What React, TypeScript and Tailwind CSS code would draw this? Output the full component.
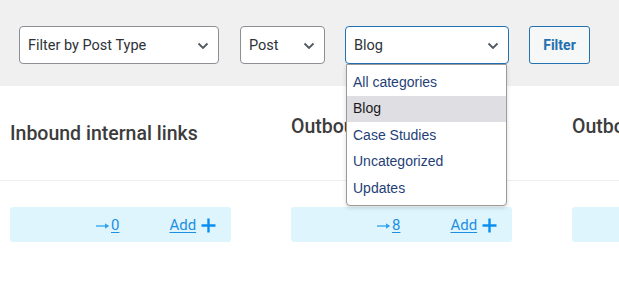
import React from "react";

const Chevron = () => (
  <svg width="12" height="8" viewBox="0 0 12 8" className="shrink-0">
    <path d="M1.5 1.5 L6 6 L10.5 1.5" fill="none" stroke="#50575e" strokeWidth="1.8" />
  </svg>
);

function Select({ label, width, focused }: { label: string; width: string; focused?: boolean }) {
  return (
    <div
      className={`${width} h-[38px] flex items-center justify-between pl-[8px] pr-[9px] pt-[2px] bg-white rounded-[4px] border ${
        focused ? "border-[#2271b1] border-[1.5px]" : "border-[#8c8f94]"
      } text-[14.5px] text-[#2c3338]`}
      style={{ fontFamily: "Roboto, sans-serif" }}
    >
      <span>{label}</span>
      <Chevron />
    </div>
  );
}

function Bar({ count }: { count: string }) {
  return (
    <div
      className="w-[221px] h-[35px] bg-[#def5fd] rounded-[3px] flex items-center pl-[86px] pt-[2px] text-[15px]"
      style={{ fontFamily: "Roboto, sans-serif" }}
    >
      <svg width="14" height="8" viewBox="0 0 14 8" className="mt-[1px]">
        <path d="M0 4 H12" stroke="#2ea3ee" strokeWidth="1.3" />
        <path d="M9 1.2 L13.2 4 L9 6.8 Z" fill="#2ea3ee" />
      </svg>
      <span className="ml-[1px] text-[#1d8fe2] underline underline-offset-2">{count}</span>
      <span className="ml-[50px] text-[#1d8fe2] underline underline-offset-2">Add</span>
      <svg width="15" height="15" viewBox="0 0 15 15" className="ml-[5px]">
        <path d="M7.5 0.5 V14.5 M0.5 7.5 H14.5" stroke="#0a8ff0" strokeWidth="2.4" />
      </svg>
    </div>
  );
}

export default function App() {
  const headFont = { fontFamily: "Roboto, sans-serif" };
  return (
    <div className="w-[619px] h-[283px] bg-white relative overflow-hidden">
      <div className="h-[86px] bg-[#f0f0f1] flex items-start pt-[26px] pl-[19px]">
        <Select label="Filter by Post Type" width="w-[200px]" />
        <div className="ml-[21px]">
          <Select label="Post" width="w-[85px]" />
        </div>
        <div className="ml-[20px]">
          <Select label="Blog" width="w-[164px]" focused />
        </div>
        <button
          className="ml-[20px] w-[61px] h-[38px] rounded-[3px] border border-[#2271b1] text-[#2271b1] text-[14px] font-bold bg-[#f6f7f7]"
          style={{ fontFamily: "Roboto, sans-serif" }}
        >
          Filter
        </button>
      </div>

      <div className="h-[95px] border-b border-[#eeeeee] grid grid-cols-[221px_221px_221px] gap-x-[60px] pl-[10px]">
        <div className="flex items-center pt-[2px] text-[19.5px] font-medium text-[#3c3c3c] whitespace-nowrap" style={headFont}>
          Inbound internal links
        </div>
        <div className="flex items-center pb-[12px] text-[19.5px] font-medium text-[#3c3c3c] whitespace-nowrap" style={headFont}>
          Outbound internal links
        </div>
        <div className="flex items-center pb-[12px] text-[19.5px] font-medium text-[#3c3c3c] whitespace-nowrap" style={headFont}>
          Outbound external links
        </div>
      </div>

      <div className="pt-[26px] pl-[10px] grid grid-cols-[221px_221px_221px] gap-x-[60px]">
        <Bar count="0" />
        <Bar count="8" />
        <Bar count="2" />
      </div>

      <div
        className="absolute left-[346px] top-[64px] w-[161px] h-[142px] bg-white border border-[#9a9a9a] rounded-b-[4px] shadow-[0_2px_4px_rgba(0,0,0,0.15)] pt-[4px] text-[14px] text-[#1f3f78]"
        style={{ fontFamily: '"Liberation Sans", Arial, sans-serif' }}
      >
        {["All categories", "Blog", "Case Studies", "Uncategorized", "Updates"].map((o) => (
          <div
            key={o}
            className={`h-[26.5px] flex items-center pl-[6px] ${o === "Blog" ? "bg-[#dfdee3] text-[#1a1a1a]" : ""}`}
          >
            {o}
          </div>
        ))}
      </div>
    </div>
  );
}
